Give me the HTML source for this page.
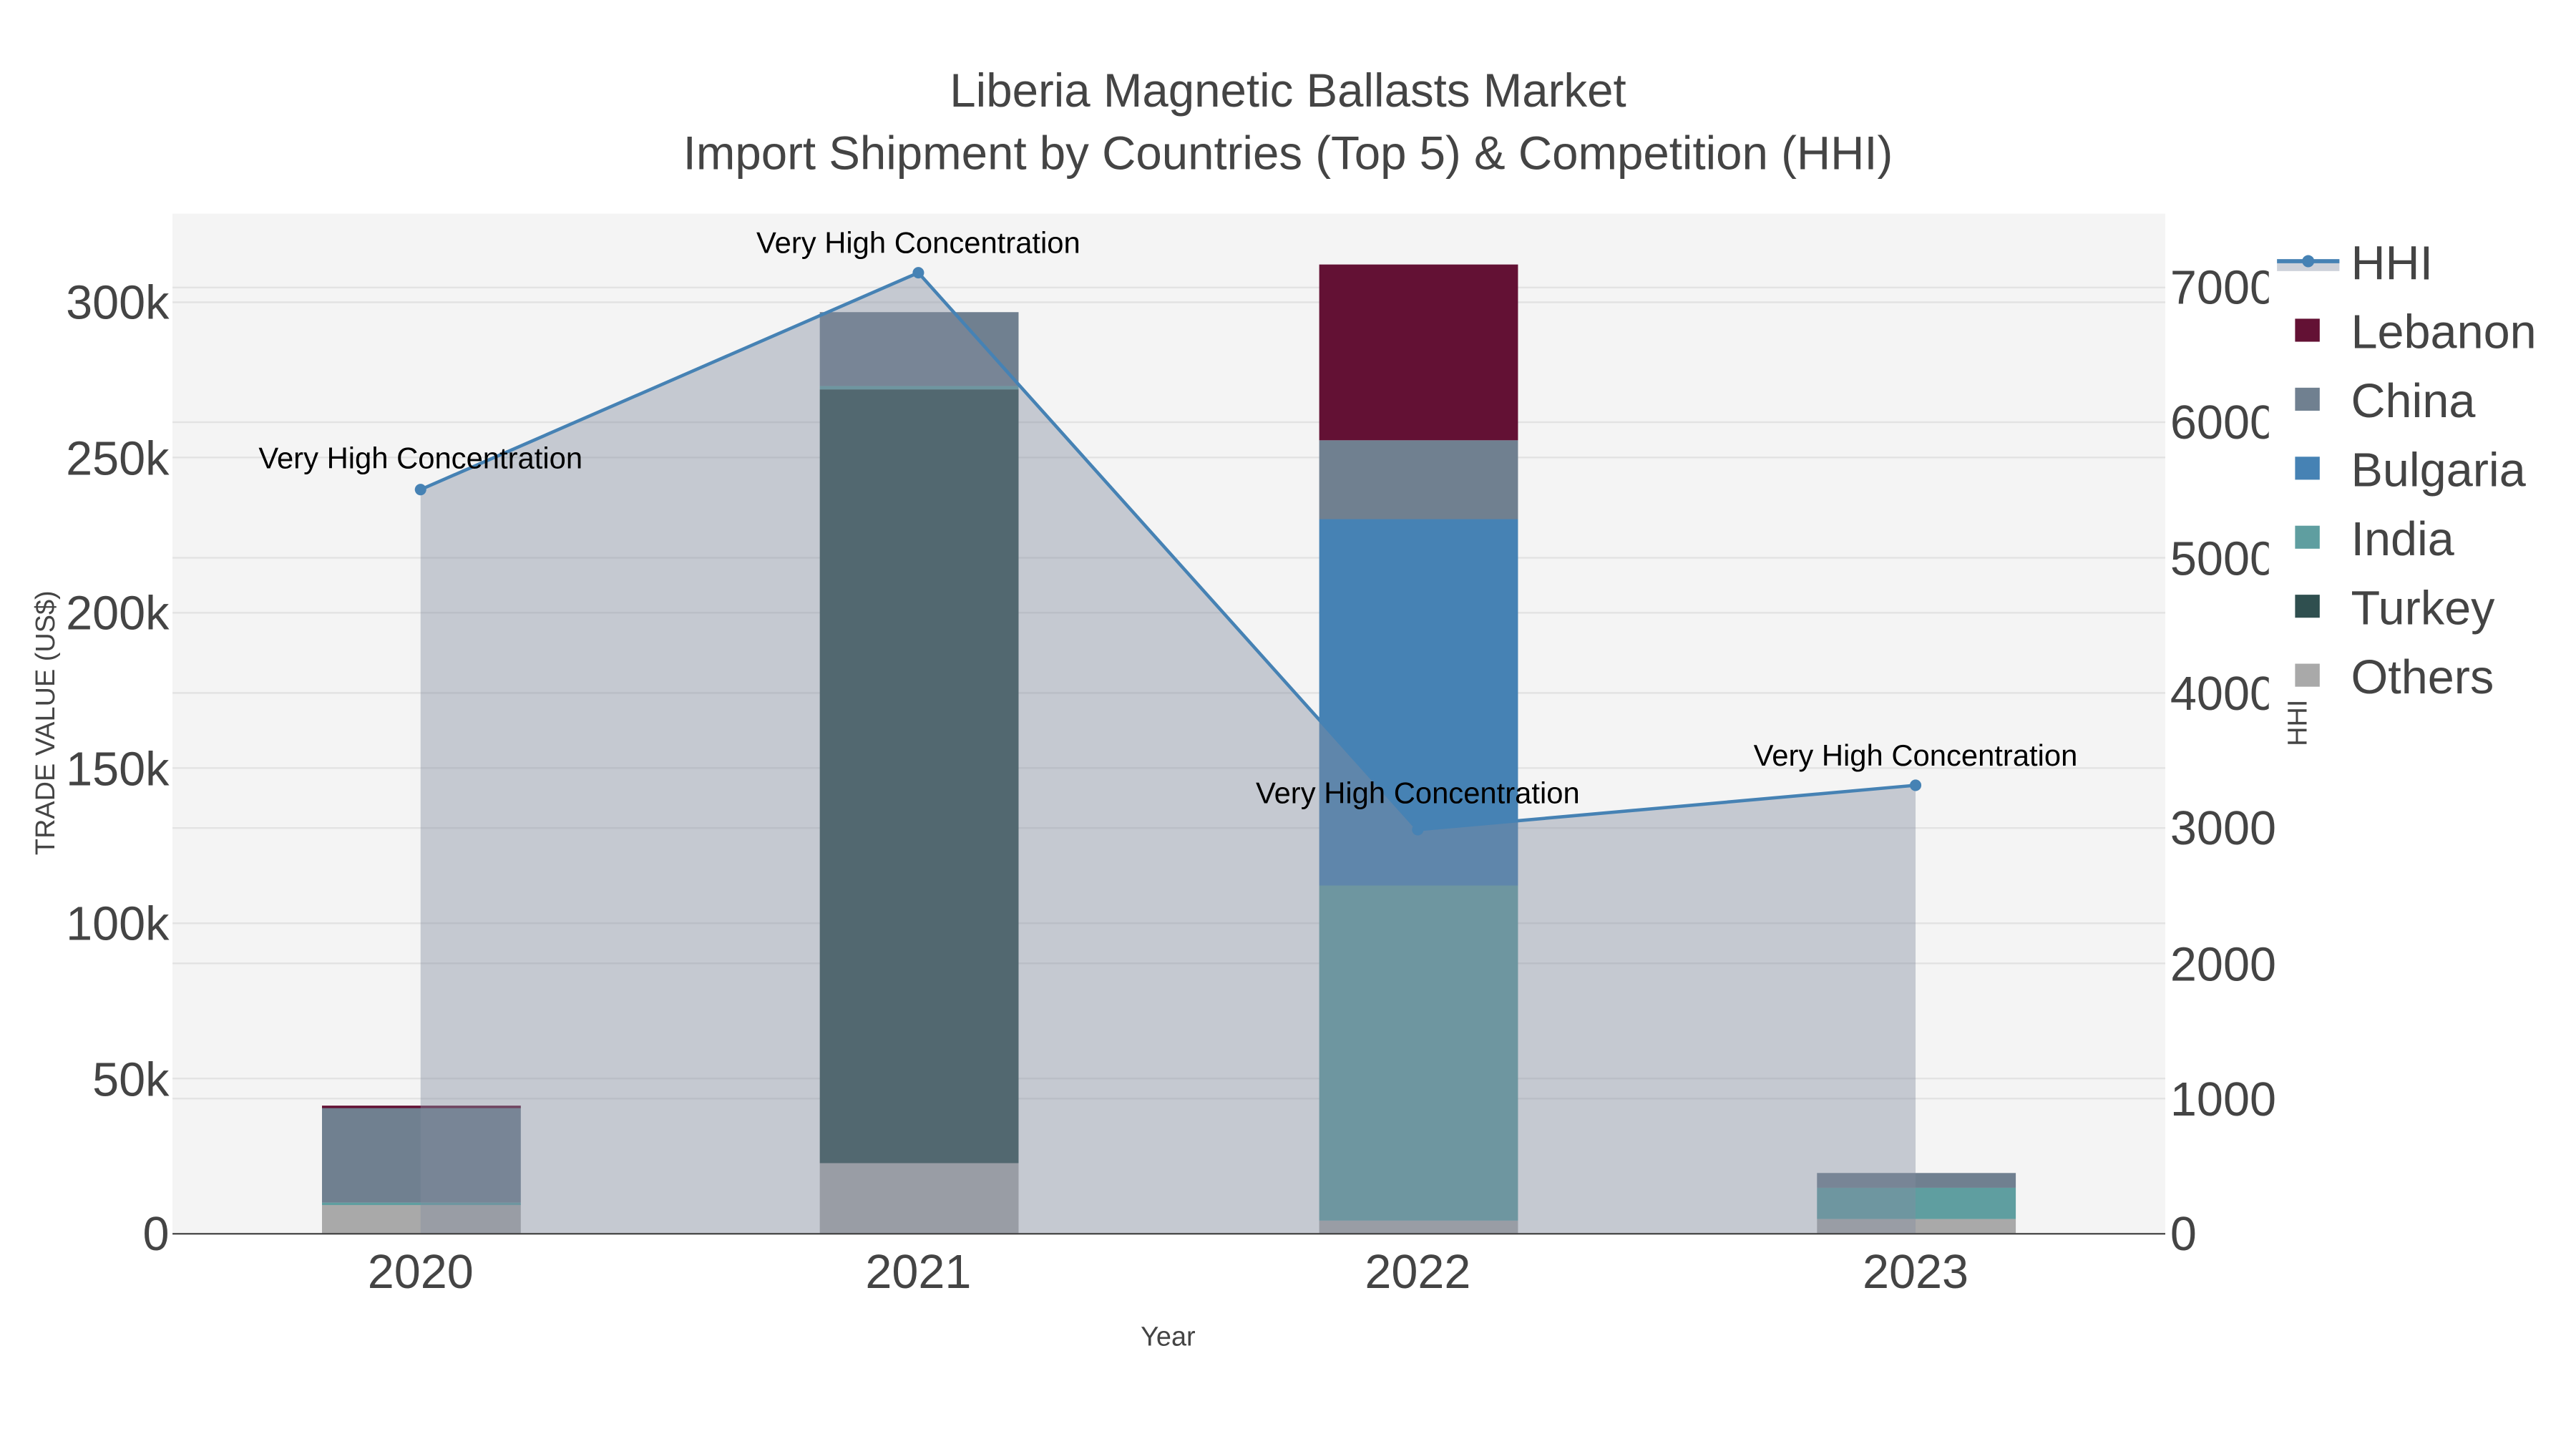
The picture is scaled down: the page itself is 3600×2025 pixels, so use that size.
<!DOCTYPE html>
<html><head><meta charset="utf-8"><style>html,body{margin:0;padding:0;background:#fff}svg{display:block}</style></head><body>
<svg width="3600" height="2025" viewBox="0 0 1568 882" xmlns="http://www.w3.org/2000/svg" font-family="Liberation Sans, Arial, sans-serif">
<rect width="1568" height="882" fill="#fff"/>
<rect x="105" y="130" width="1213" height="621" fill="#f4f4f4"/>
<g stroke="#e2e2e2" stroke-width="1">
<line x1="105" x2="1318" y1="656.5" y2="656.5"/><line x1="105" x2="1318" y1="562" y2="562"/><line x1="105" x2="1318" y1="467.5" y2="467.5"/><line x1="105" x2="1318" y1="373" y2="373"/><line x1="105" x2="1318" y1="278.5" y2="278.5"/><line x1="105" x2="1318" y1="184" y2="184"/>
<line x1="105" x2="1318" y1="668.7" y2="668.7"/><line x1="105" x2="1318" y1="586.4" y2="586.4"/><line x1="105" x2="1318" y1="504" y2="504"/><line x1="105" x2="1318" y1="421.8" y2="421.8"/><line x1="105" x2="1318" y1="339.5" y2="339.5"/><line x1="105" x2="1318" y1="257" y2="257"/><line x1="105" x2="1318" y1="175" y2="175"/>
</g>
<rect x="196" y="733" width="121" height="18" fill="#a9a9a9"/>
<rect x="196" y="732" width="121" height="1.5" fill="#5f9ea0"/>
<rect x="196" y="674" width="121" height="58" fill="#708090"/>
<rect x="196" y="673" width="121" height="1.5" fill="#631134"/>
<rect x="499" y="708" width="121" height="43" fill="#a9a9a9"/>
<rect x="499" y="237" width="121" height="471" fill="#2f4f4f"/>
<rect x="499" y="235" width="121" height="2" fill="#5f9ea0"/>
<rect x="499" y="190" width="121" height="45" fill="#708090"/>
<rect x="803" y="743" width="121" height="8" fill="#a9a9a9"/>
<rect x="803" y="539" width="121" height="204" fill="#5f9ea0"/>
<rect x="803" y="316" width="121" height="223" fill="#4682b4"/>
<rect x="803" y="268" width="121" height="48" fill="#708090"/>
<rect x="803" y="161" width="121" height="107" fill="#631134"/>
<rect x="1106" y="742" width="121" height="9" fill="#a9a9a9"/>
<rect x="1106" y="723" width="121" height="19" fill="#5f9ea0"/>
<rect x="1106" y="714" width="121" height="9" fill="#708090"/>
<path d="M256,751 L256,298 L559,166 L863,505 L1166,478 L1166,751 Z" fill="rgb(130,140,160)" fill-opacity="0.42"/>
<line x1="105" x2="1318" y1="751" y2="751" stroke="#444" stroke-width="1"/>
<polyline points="256,298 559,166 863,505 1166,478" fill="none" stroke="#4682b4" stroke-width="2"/>
<g fill="#4682b4"><circle cx="256" cy="298" r="3.5"/><circle cx="559" cy="166" r="3.5"/><circle cx="863" cy="505" r="3.5"/><circle cx="1166" cy="478" r="3.5"/></g>
<g font-size="18.2" fill="#000" text-anchor="middle">
<text x="256" y="285">Very High Concentration</text>
<text x="559" y="154">Very High Concentration</text>
<text x="863" y="489">Very High Concentration</text>
<text x="1166" y="466">Very High Concentration</text>
</g>
<g font-size="28.5" fill="#444" text-anchor="middle">
<text x="784" y="65">Liberia Magnetic Ballasts Market</text>
<text x="784" y="103">Import Shipment by Countries (Top 5) &amp; Competition (HHI)</text>
</g>
<g font-size="29" fill="#444" text-anchor="end">
<text x="103" y="761">0</text><text x="103" y="667">50k</text><text x="103" y="572">100k</text><text x="103" y="478">150k</text><text x="103" y="383">200k</text><text x="103" y="289">250k</text><text x="103" y="194">300k</text>
</g>
<g font-size="29" fill="#444">
<text x="1321" y="761">0</text><text x="1321" y="679">1000</text><text x="1321" y="597">2000</text><text x="1321" y="514">3000</text><text x="1321" y="432">4000</text><text x="1321" y="350">5000</text><text x="1321" y="267">6000</text><text x="1321" y="185">7000</text>
</g>
<g font-size="29" fill="#444" text-anchor="middle">
<text x="256" y="784">2020</text><text x="559" y="784">2021</text><text x="863" y="784">2022</text><text x="1166" y="784">2023</text>
</g>
<text x="711" y="819" font-size="16.5" fill="#444" text-anchor="middle">Year</text>
<text transform="translate(33,440) rotate(-90)" font-size="16.5" fill="#444" text-anchor="middle">TRADE VALUE (US$)</text>
<rect x="1381" y="130" width="187" height="330" fill="#fff"/>
<text transform="translate(1404,440) rotate(-90)" font-size="16.5" fill="#444" text-anchor="middle">HHI</text>
<rect x="1386" y="160" width="38" height="5" fill="#cdd1d9"/>
<line x1="1386" x2="1424" y1="159" y2="159" stroke="#4682b4" stroke-width="2.5"/>
<circle cx="1405" cy="159" r="3.7" fill="#4682b4"/>
<rect x="1397" y="194" width="15" height="14" fill="#631134"/>
<rect x="1397" y="236" width="15" height="14" fill="#708090"/>
<rect x="1397" y="278" width="15" height="14" fill="#4682b4"/>
<rect x="1397" y="320" width="15" height="14" fill="#5f9ea0"/>
<rect x="1397" y="362" width="15" height="14" fill="#2f4f4f"/>
<rect x="1397" y="404" width="15" height="14" fill="#a9a9a9"/>
<g font-size="29" fill="#444">
<text x="1431" y="170">HHI</text><text x="1431" y="212">Lebanon</text><text x="1431" y="254">China</text><text x="1431" y="296">Bulgaria</text><text x="1431" y="338">India</text><text x="1431" y="380">Turkey</text><text x="1431" y="422">Others</text>
</g>
</svg>
</body></html>
